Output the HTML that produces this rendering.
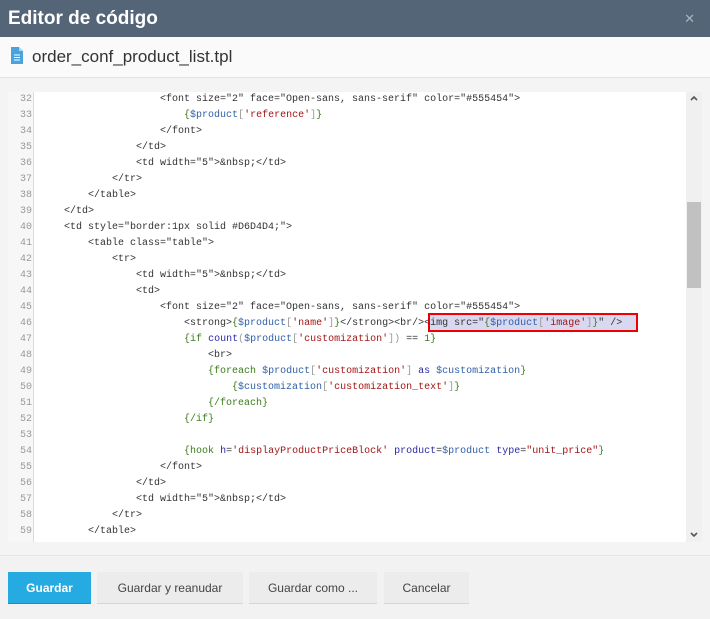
<!DOCTYPE html>
<html><head><meta charset="utf-8"><style>
*{margin:0;padding:0;box-sizing:border-box}
body{width:710px;height:619px;background:#f4f4f4;font-family:"Liberation Sans",sans-serif;position:relative;overflow:hidden}
.hd{position:absolute;left:0;top:0;width:710px;height:37px;background:#536577;color:#fff;font-size:19px;font-weight:bold;padding:8px 0 0 8px}
.x{position:absolute;right:15px;top:11px;color:#aab4bf;font-size:13px;font-weight:normal}
.tb{position:absolute;left:0;top:37px;width:710px;height:41px;background:#fafafa;border-bottom:1px solid #e2e2e2}
.tb .n{position:absolute;left:32px;top:10px;font-size:17px;color:#333}
.ed{position:absolute;left:8px;top:92px;width:694px;height:450px;background:#fff;overflow:hidden}
.gut{position:absolute;left:0;top:0;width:26px;height:450px;background:#f7f7f7;border-right:1px solid #ddd}
.ln{position:absolute;left:0;width:24px;text-align:right;font:10px "Liberation Mono",monospace;color:#999;line-height:16px}
.code{position:absolute;left:32px;top:0;font:10px "Liberation Mono",monospace;line-height:16px;color:#333;white-space:pre}
.g{color:#3a7d1e}.b{color:#3060a8}.k{color:#2a2aa8}.s{color:#a31515}.p{color:#999}
.hl{position:absolute;left:420px;top:221px;width:210px;height:19px;border:2px solid #e00;background:rgba(190,190,230,.6)}
.sb{position:absolute;left:678px;top:0;width:16px;height:450px;background:#f0f0f0}
.th{position:absolute;left:679px;top:110px;width:14px;height:86px;background:#c1c1c1}
.ft{position:absolute;left:0;top:555px;width:710px;height:64px;background:#f2f2f2;border-top:1px solid #e4e4e4}
.bt{position:absolute;top:572px;height:32px;font-size:12px;text-align:center;line-height:32px;color:#444;background:#ececec;border-bottom:1px solid #d6d6d6}
</style></head><body>
<div class="hd">Editor de código<span class="x">✕</span></div>
<div class="tb">
<svg style="position:absolute;left:10px;top:9px" width="14" height="19" viewBox="0 0 14 19"><path d="M1 1h8l4 4v13H1z" fill="#4aa3df"/><path d="M9 1v4h4" fill="#a8d4f0"/><path d="M4 9h6M4 11.5h6M4 14h6" stroke="#fff" stroke-width="1"/></svg>
<span class="n">order_conf_product_list.tpl</span></div>
<div class="ed">
<div class="gut"></div>
<div class="ln" style="top:0">32<br>33<br>34<br>35<br>36<br>37<br>38<br>39<br>40<br>41<br>42<br>43<br>44<br>45<br>46<br>47<br>48<br>49<br>50<br>51<br>52<br>53<br>54<br>55<br>56<br>57<br>58<br>59</div>
<div class="hl"></div>
<div class="code">                    &lt;font size="2" face="Open-sans, sans-serif" color="#555454"&gt;
                        <span class="g">{</span><span class="b">$product</span><span class="p">[</span><span class="s">'reference'</span><span class="p">]</span><span class="g">}</span>
                    &lt;/font&gt;
                &lt;/td&gt;
                &lt;td width="5"&gt;&amp;nbsp;&lt;/td&gt;
            &lt;/tr&gt;
        &lt;/table&gt;
    &lt;/td&gt;
    &lt;td style="border:1px solid #D6D4D4;"&gt;
        &lt;table class="table"&gt;
            &lt;tr&gt;
                &lt;td width="5"&gt;&amp;nbsp;&lt;/td&gt;
                &lt;td&gt;
                    &lt;font size="2" face="Open-sans, sans-serif" color="#555454"&gt;
                        &lt;strong&gt;<span class="g">{</span><span class="b">$product</span><span class="p">[</span><span class="s">'name'</span><span class="p">]</span><span class="g">}</span>&lt;/strong&gt;&lt;br/&gt;&lt;img src="<span class="g">{</span><span class="b">$product</span><span class="p">[</span><span class="s">'image'</span><span class="p">]</span><span class="g">}</span>" /&gt;
                        <span class="g">{if</span> <span class="k">count</span><span class="p">(</span><span class="b">$product</span><span class="p">[</span><span class="s">'customization'</span><span class="p">])</span> == <span class="g">1}</span>
                            &lt;br&gt;
                            <span class="g">{foreach</span> <span class="b">$product</span><span class="p">[</span><span class="s">'customization'</span><span class="p">]</span> <span class="k">as</span> <span class="b">$customization</span><span class="g">}</span>
                                <span class="g">{</span><span class="b">$customization</span><span class="p">[</span><span class="s">'customization_text'</span><span class="p">]</span><span class="g">}</span>
                            <span class="g">{/foreach}</span>
                        <span class="g">{/if}</span>

                        <span class="g">{hook</span> <span class="k">h</span>=<span class="s">'displayProductPriceBlock'</span> <span class="k">product</span>=<span class="b">$product</span> <span class="k">type</span>=<span class="s">"unit_price"</span><span class="g">}</span>
                    &lt;/font&gt;
                &lt;/td&gt;
                &lt;td width="5"&gt;&amp;nbsp;&lt;/td&gt;
            &lt;/tr&gt;
        &lt;/table&gt;</div>
<div class="sb"></div><div class="th"></div>
<svg style="position:absolute;left:682px;top:3px" width="8" height="6"><path d="M1 5L4 2L7 5" stroke="#555" stroke-width="1.6" fill="none"/></svg>
<svg style="position:absolute;left:682px;top:440px" width="8" height="6"><path d="M1 1L4 4L7 1" stroke="#555" stroke-width="1.6" fill="none"/></svg>
</div>
<div class="ft"></div>
<div class="bt" style="left:8px;width:83px;background:#25aae1;color:#fff;font-weight:bold;border-bottom-color:#1e8fc0">Guardar</div>
<div class="bt" style="left:97px;width:146px">Guardar y reanudar</div>
<div class="bt" style="left:249px;width:128px">Guardar como ...</div>
<div class="bt" style="left:384px;width:85px">Cancelar</div>
</body></html>
